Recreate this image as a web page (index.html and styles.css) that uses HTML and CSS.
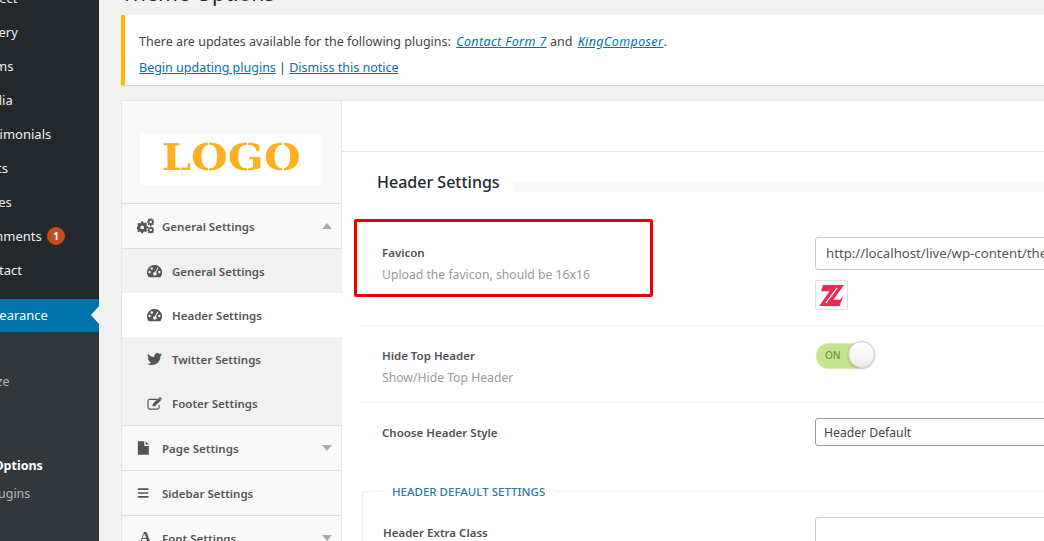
FILE: index.html
```html
<!DOCTYPE html>
<html lang="en">
<head>
<meta charset="utf-8">
<title>Theme Options</title>
<link rel="stylesheet" href="styles.css">
</head>
<body>
<div class="page">
  <nav class="wpnav">
    <ul class="menu">
      <li class="mi first">Project</li>
      <li class="mi">Gallery</li>
      <li class="mi">Forms</li>
      <li class="mi">Media</li>
      <li class="mi">Testimonials</li>
      <li class="mi">Posts</li>
      <li class="mi">Pages</li>
      <li class="mi">Comments <span class="bubble">1</span></li>
      <li class="mi">Contact</li>
    </ul>
    <div class="current">Appearance</div>
    <ul class="sub">
      <li class="si">Themes</li>
      <li class="si">Customize</li>
      <li class="si">Widgets</li>
      <li class="si strong">Theme Options</li>
      <li class="si">Install Plugins</li>
    </ul>
  </nav>
  <main class="main">
    <h1 class="title">Theme Options</h1>
    <div class="notice">
      <p class="nline">There are updates available for the following plugins: <a href="#"><em>Contact Form 7</em></a> and <a href="#"><em>KingComposer</em></a>.</p>
      <p class="nline"><a href="#">Begin updating plugins</a> | <a href="#">Dismiss this notice</a></p>
    </div>
    <section class="panel">
      <aside class="side">
        <div class="logowrap"><div class="logo"><span class="logotxt">LOGO</span></div></div>
        <div class="tab"><svg class="ic" viewBox="0 0 20 18"><g fill="#555"><path fill-rule="evenodd" d="M5 3.500h2.200l.4 1.600 1.300.5 1.400-.8 1.500 1.500-.8 1.400.5 1.300 1.600.4v2.200l-1.600.4-.5 1.300.8 1.400-1.500 1.500-1.400-.8-1.300.5-.4 1.600H5l-.4-1.600-1.300-.5-1.400.8L.4 15.700l.8-1.400-.5-1.300-.7-.2V9.600l.7-.2.5-1.300-.8-1.400 1.500-1.500 1.400.8 1.300-.5zM6.100 8.300a2.300 2.300 0 1 0 0 4.600 2.300 2.300 0 0 0 0-4.600z"/><path fill-rule="evenodd" d="M15.600 0h1.300l.3 1.100.7.300 1-.5.800.9-.5 1 .3.700 1 .3v1.300l-1 .3-.3.700.5 1-.8.900-1-.5-.7.300-.3 1.100h-1.300l-.3-1.100-.7-.3-1 .5-.8-.9.5-1-.3-.7-1-.3V3.100l1-.3.3-.7-.5-1 .8-.9 1 .5.700-.3zM16.200 2.700a1.500 1.500 0 1 0 0 3 1.500 1.500 0 0 0 0-3z"/><path fill-rule="evenodd" d="M15.600 9.500h1.300l.3 1.100.7.300 1-.5.800.9-.5 1 .3.700 1 .3v1.300l-1 .3-.3.700.5 1-.8.900-1-.5-.7.300-.3.200h-1.300l-.3-.2-.7-.3-1 .5-.8-.9.5-1-.3-.7-1-.3v-1.300l1-.3.3-.7-.5-1 .8-.9 1 .5.700-.3zM16.200 12.200a1.500 1.500 0 1 0 0 3 1.500 1.500 0 0 0 0-3z"/></g></svg><span class="tabtxt">General Settings</span><i class="up"></i></div>
        <div class="subtabs">
          <div class="subtab"><svg class="ic2" viewBox="0 0 16 14"><path fill="#555" fill-rule="evenodd" d="M8 0a8 8 0 0 1 6.900 12.200l-.6 1H1.700l-.6-1A8 8 0 0 1 8 0zM2.800 6.200a1.300 1.300 0 1 0 0 2.600 1.300 1.300 0 0 0 0-2.600zM5 2.500a1.300 1.300 0 1 0 0 2.600 1.300 1.300 0 0 0 0-2.600zM13.200 6.200a1.300 1.300 0 1 0 0 2.600 1.300 1.300 0 0 0 0-2.600zM11.200 2.700L8.500 7.700a1.800 1.800 0 1 0 1.100.5l2.500-5z"/></svg><span class="subtxt">General Settings</span></div>
          <div class="subtab on"><svg class="ic2" viewBox="0 0 16 14"><path fill="#555" fill-rule="evenodd" d="M8 0a8 8 0 0 1 6.900 12.200l-.6 1H1.700l-.6-1A8 8 0 0 1 8 0zM2.800 6.200a1.300 1.300 0 1 0 0 2.600 1.300 1.300 0 0 0 0-2.600zM5 2.500a1.300 1.300 0 1 0 0 2.600 1.300 1.300 0 0 0 0-2.600zM13.200 6.200a1.300 1.300 0 1 0 0 2.600 1.300 1.300 0 0 0 0-2.600zM11.200 2.700L8.500 7.700a1.800 1.800 0 1 0 1.100.5l2.500-5z"/></svg><span class="subtxt">Header Settings</span></div>
          <div class="subtab"><svg class="ic2" viewBox="0 0 16 14"><path fill="#555" d="M16 2a6.500 6.500 0 0 1-1.700 1.700v.4C14.300 8.500 11 13 5 13c-1.800 0-3.600-.5-5-1.400.3 0 .5.100.8.100 1.500 0 2.900-.5 4-1.400-1.400 0-2.600-1-3-2.200.5.100.9.100 1.400 0C1.700 7.800.6 6.500.6 5c.5.200 1 .4 1.500.4C.7 4.500.2 2.600 1.100 1.100 2.700 3 5 4.300 7.800 4.400 7.300 2.200 9 0 11.100 0c1 0 1.800.4 2.400 1 .7-.1 1.400-.4 2-.8-.2.700-.7 1.300-1.400 1.700.7-.1 1.300-.3 1.900-.5z"/></svg><span class="subtxt">Twitter Settings</span></div>
          <div class="subtab"><svg class="ic2" viewBox="0 0 16 14"><path fill="none" stroke="#555" stroke-width="1.200" d="M13 8.500v2.500a2 2 0 0 1-2 2H3a2 2 0 0 1-2-2V4.500a2 2 0 0 1 2-2h7.500"/><path fill="#555" d="M6 7.500L12.500 1l2.500 2.500L8.500 10H6zM13.300.3c.3-.3.700-.3 1 0l1.400 1.400c.3.300.3.700 0 1l-.4.400-2.400-2.400z"/></svg><span class="subtxt">Footer Settings</span></div>
        </div>
        <div class="tab"><svg class="ic" viewBox="0 0 20 18"><path fill="#555" d="M1 1h7.500v5.500H14V17H1zM10 1l4 4h-4z"/></svg><span class="tabtxt">Page Settings</span><i class="down"></i></div>
        <div class="tab"><svg class="ic" viewBox="0 0 20 18"><path fill="#555" d="M1 3.500h12.500v2H1zM1 8h12.500v2H1zM1 12.500h12.500v2H1z"/></svg><span class="tabtxt">Sidebar Settings</span></div>
        <div class="tab"><span class="fonta">A</span><span class="tabtxt">Font Settings</span><i class="down"></i></div>
      </aside>
      <div class="content">
        <div class="topbar"></div>
        <div class="heading"><h2 class="htxt">Header Settings</h2><div class="hbar"></div></div>
        <div class="row rfav">
          <div class="lab labfav"><div class="name">Favicon</div><div class="desc">Upload the favicon, should be 16x16</div></div>
          <div class="ctl">
            <div class="input">http://localhost/live/wp-content/themes/zota/assets/images/favicon.png</div>
            <div class="thumb"><svg class="zlogo" viewBox="0 0 26 22"><path fill="#ee2a50" d="M4 0H26L15 15.500H21.500L25 12 21.500 22H0L11 6.500H2z"/><path fill="none" stroke="#fff" stroke-width="1.200" d="M19 3L7 19"/></svg></div>
          </div>
        </div>
        <div class="row rhide">
          <div class="lab labhide"><div class="name">Hide Top Header</div><div class="desc">Show/Hide Top Header</div></div>
          <div class="ctl"><div class="toggle"><span class="ontxt">ON</span><span class="knob"></span></div></div>
        </div>
        <div class="row rstyle">
          <div class="lab labhide"><div class="name">Choose Header Style</div></div>
          <div class="ctl"><div class="select">Header Default</div></div>
        </div>
        <div class="group">
          <div class="legend">HEADER DEFAULT SETTINGS</div>
          <div class="grow">
            <div class="name gname">Header Extra Class</div>
            <div class="ginput"></div>
          </div>
        </div>
        <div class="redbox"></div>
      </div>
    </section>
  </main>
</div>
</body>
</html>
```
FILE: styles.css
```css
* { box-sizing: border-box; }
html, body { margin: 0; padding: 0; height: 541px; overflow: hidden; }
body { background: #f1f1f1; font-family: "Noto Sans", "Open Sans", sans-serif; font-size: 13px; color: #444; }
ul { list-style: none; margin: 0; padding: 0; }
.page { display: flex; width: 1044px; height: 541px; overflow: hidden; }

.wpnav { flex: 0 0 99px; width: 99px; height: 541px; background: #23282d; color: #eee; overflow: hidden; position: relative; }
.menu { margin-top: -19px; }
.mi { height: 34px; line-height: 34px; margin-left: -25px; white-space: nowrap; font-size: 13px; }
.bubble { display: inline-block; width: 18px; height: 18px; border-radius: 50%; background: #ca4a1f; color: #fff; font-size: 10px; font-weight: 700; line-height: 18px; text-align: center; margin-left: 2px; vertical-align: 1px; }
.current { margin-top: 12px; height: 33px; line-height: 33px; background: #0073aa; color: #fff; text-indent: -25px; white-space: nowrap; position: relative; font-size: 13px; }
.current::after { content: ""; position: absolute; right: 0; top: 7px; border: 9px solid transparent; border-right-color: #f1f1f1; border-left-width: 0; border-right-width: 8px; }
.sub { background: #32373c; height: 220px; color: #b4b9be; }
.si { white-space: nowrap; margin-left: -52px; height: 33px; line-height: 33px; font-size: 12.500px; }
.si:nth-child(3) { height: 51px; }
.si.strong { color: #fff; font-weight: 700; height: 28px; line-height: 33px; }

.main { flex: 0 0 auto; width: 1100px; padding-left: 22px; }
.title { margin: -22px 0 0; height: 37px; font-size: 21.300px; line-height: 30px; font-weight: 400; color: #23282d; white-space: nowrap; }
.notice { height: 70px; background: #fff; border-left: 4px solid #ffb900; box-shadow: 0 1px 1px rgba(0,0,0,.1); padding: 18px 0 0 14px; }
.nline { margin: 0 0 8px; line-height: 18px; font-size: 12.500px; height: 18px; white-space: nowrap; color: #444; }
.nline a { color: #0073aa; text-decoration: underline; }
.nline em { letter-spacing: .4px; margin-left: 2px; }

.panel { margin-top: 15px; display: flex; height: 460px; border: 1px solid #e5e5e5; border-right: 0; border-radius: 3px 0 0 0; background: #fff; }
.side { flex: 0 0 220px; background: #f9f9f9; border-right: 1px solid #e5e5e5; }
.logowrap { height: 103px; padding: 33px 0 0 18px; border-bottom: 1px solid #e0e0e0; }
.logo { width: 182px; height: 51px; background: #fff; display: flex; justify-content: center; }
.logotxt { display: block; width: 122px; height: 46px; margin-top: 0; font-family: "DejaVu Serif", serif; font-weight: 700; font-size: 37px; line-height: 46px; white-space: nowrap; transform: scaleX(1.14); color: transparent; background: linear-gradient(to right, #ffb020 0 13%, #fff 13% 14%, #ffb020 14% 33.500%, #fff 33.500% 34.500%, #ffb020 34.500% 61.500%, #fff 61.500% 62.500%, #ffb020 62.500% 87%, #fff 87% 88%, #ffb020 88%); -webkit-background-clip: text; background-clip: text; }
.tab { height: 45px; display: flex; align-items: center; padding-left: 15px; border-bottom: 1px solid #e0e0e0; color: #555; font-weight: 600; font-size: 11.500px; position: relative; }
.ic { width: 17px; height: 16px; flex: none; }
.tabtxt { margin-left: 8px; white-space: nowrap; }
.up, .down { position: absolute; right: 9px; top: 19px; width: 0; height: 0; border-left: 5px solid transparent; border-right: 5px solid transparent; }
.up { border-bottom: 6px solid #aaa; }
.down { border-top: 6px solid #aaa; }
.fonta { width: 17px; font-family: "Liberation Serif", serif; font-size: 17px; font-weight: 700; padding-left: 2px; }
.subtabs { background: #f1f1f1; margin-right: -1px; border-bottom: 1px solid #e0e0e0; }
.subtab { height: 44px; display: flex; align-items: center; padding-left: 25px; color: #555; font-weight: 600; font-size: 11.500px; }
.subtab.on { background: #fff; }
.ic2 { width: 15px; height: 13px; flex: none; }
.subtxt { margin-left: 10px; white-space: nowrap; }

.content { flex: 1; position: relative; min-width: 0; }
.topbar { height: 51px; border-bottom: 1px solid #e5e5e5; }
.heading { display: flex; align-items: flex-start; height: 68px; padding: 19px 0 0 35px; }
.htxt { margin: 0; font-size: 16px; font-weight: 500; line-height: 22px; color: #23282d; white-space: nowrap; }
.hbar { flex: 1; height: 10px; background: #f9f9f9; margin: 11px 0 0 14px; }
.row { display: flex; margin-left: 20px; border-bottom: 1px solid #eee; }
.rfav { height: 106px; padding-top: 17px; }
.rhide { height: 77px; padding-top: 15px; }
.rstyle { height: 88px; padding-top: 15px; border-bottom: 0; align-items: flex-start; }
.lab { flex: 0 0 453px; padding-left: 20px; }
.labfav { padding-top: 7px; }
.labhide { padding-top: 6px; }
.name { font-size: 11.500px; font-weight: 600; color: #50505a; line-height: 18px; white-space: nowrap; }
.desc { font-size: 12.200px; color: #999; line-height: 18px; margin-top: 4px; white-space: nowrap; }
.ctl { flex: 1; min-width: 0; }
.input { height: 33px; border: 1px solid #c8c8c8; border-radius: 3px; background: #fff; padding: 0 10px; line-height: 31px; color: #555; font-size: 13.200px; white-space: nowrap; overflow: hidden; }
.thumb { margin-top: 10px; width: 33px; height: 30px; border: 1px solid #e0e0e0; border-radius: 2px; display: flex; align-items: center; justify-content: center; }
.zlogo { width: 25px; height: 21px; }
.toggle { position: relative; width: 59px; height: 26px; margin-left: 1px; }
.toggle::before { content: ""; position: absolute; left: 0; top: 2px; width: 50px; height: 24px; border-radius: 12px; background: #c5e48e; border: 1px solid #d4e8b0; }
.ontxt { position: absolute; left: 9px; top: 6px; font-size: 10px; line-height: 16px; color: #75904f; font-weight: 500; }
.knob { position: absolute; right: 0; top: 0; width: 27px; height: 27px; border-radius: 50%; background: linear-gradient(#fff, #eee); border: 1px solid #c8c8c8; box-shadow: 0 1px 2px rgba(0,0,0,.25); }
.select { height: 28px; border: 1px solid #9a9a9a; border-radius: 3px; background: #fff; padding-left: 8px; line-height: 28px; font-size: 12.200px; color: #444; }
.group { margin-left: 20px; border-top: 1px solid #eee; border-left: 1px solid #eee; border-top-left-radius: 4px; height: 100px; position: relative; }
.legend { position: absolute; left: 20px; top: -9px; background: #fff; padding: 0 9px; line-height: 17px; font-size: 11.500px; font-weight: 500; color: #2a7ba8; white-space: nowrap; }
.grow { display: flex; padding: 25px 0 0 20px; }
.gname { flex: 0 0 432px; line-height: 32px; }
.ginput { flex: 1; height: 34px; border: 1px solid #d0d0d0; border-radius: 3px; }
.redbox { position: absolute; left: 12px; top: 118px; width: 299px; height: 78px; border: 3px solid #ef0000; border-radius: 2px; pointer-events: none; }
```
